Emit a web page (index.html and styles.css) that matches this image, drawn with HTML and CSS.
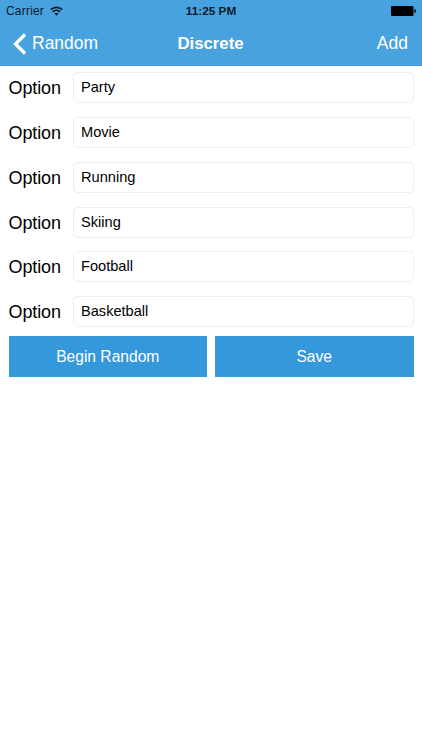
FILE: index.html
```
<!DOCTYPE html>
<html lang="en">
<head>
<meta charset="utf-8">
<title>Discrete</title>
<link rel="stylesheet" href="styles.css">
</head>
<body>
<header class="header">
  <div class="status">
    <div class="carrier"><span class="carrier-name">Carrier</span>
      <svg class="wifi" viewBox="0 0 13 10"><g fill="none" stroke="#0b1a26" stroke-width="1.8"><path d="M.8 3.6a8.2 8.2 0 0 1 11.4 0M2.9 5.9a5.2 5.2 0 0 1 7.2 0"/></g><path fill="#0b1a26" d="M4.5 7.6a2.9 2.9 0 0 1 4 0l-2 2.1z"/></svg>
    </div>
    <span class="time">11:25 PM</span>
    <svg class="battery" viewBox="0 0 25 10"><rect width="22.5" height="10" rx="1"/><path d="M23.3 3.2h.5q1 0 1 1v1.6q0 1-1 1h-.5z"/></svg>
  </div>
  <nav class="nav">
    <a class="back"><svg class="chevron" viewBox="0 0 14 22"><path d="M12 1.5 2.5 11 12 20.5" fill="none" stroke="#fff" stroke-width="3.4"/></svg><span class="back-text">Random</span></a>
    <h1 class="title"><span class="title-text">Discrete</span></h1>
    <a class="add"><span class="add-text">Add</span></a>
  </nav>
</header>
<main class="form">
  <label class="row"><span class="label">Option</span><span class="field">Party</span></label>
  <label class="row"><span class="label">Option</span><span class="field">Movie</span></label>
  <label class="row"><span class="label">Option</span><span class="field">Running</span></label>
  <label class="row"><span class="label">Option</span><span class="field">Skiing</span></label>
  <label class="row"><span class="label">Option</span><span class="field">Football</span></label>
  <label class="row"><span class="label">Option</span><span class="field">Basketball</span></label>
  <div class="actions"><button class="button">Begin Random</button><button class="button">Save</button></div>
</main>
</body>
</html>
```
FILE: styles.css
```
* { box-sizing: border-box; }
body { margin: 0; height: 750px; background: #fff; color: #000; font-family: "Liberation Sans", Arial, sans-serif; }
.header { height: 66px; background: #48a2e0; }
.status { height: 22px; padding: 0 6px; display: grid; grid-template-columns: 1fr auto 1fr; align-items: center; font-size: 12px; color: #0b1a26; }
.carrier { display: flex; align-items: center; gap: 5.5px; }
.carrier-name { letter-spacing: .2px; }
.wifi { width: 13px; height: 10px; }
.time { font-weight: bold; font-size: 11.8px; }
.battery { width: 25px; height: 10px; justify-self: end; fill: #000; }
.nav { height: 43px; padding: 0 14px 0 13px; display: grid; grid-template-columns: 1fr auto 1fr; align-items: center; font-size: 17.5px; color: #fff; }
.back { display: flex; align-items: center; gap: 5px; }
.chevron { width: 14px; height: 22px; }
.title { margin: 0; font-size: 16.8px; }
.add { justify-self: end; }
.form { padding: 6.4px 8.5px 0; }
.row { display: flex; align-items: center; height: 31px; margin-bottom: 13.75px; }
.label { width: 64.5px; font-size: 18px; letter-spacing: -.1px; padding-top: 2px; }
.field { flex: 1; height: 31px; line-height: 28px; padding-left: 7px; border: 1px solid #ededed; border-radius: 5px; font-size: 14.6px; }
.actions { display: grid; grid-template-columns: 1fr 1fr; gap: 8px; margin-top: -5px; }
.button { height: 41px; padding: 1px 0 0; border: 0; background: #3498db; color: #fff; font: 15.6px "Liberation Sans", Arial, sans-serif; }
```
